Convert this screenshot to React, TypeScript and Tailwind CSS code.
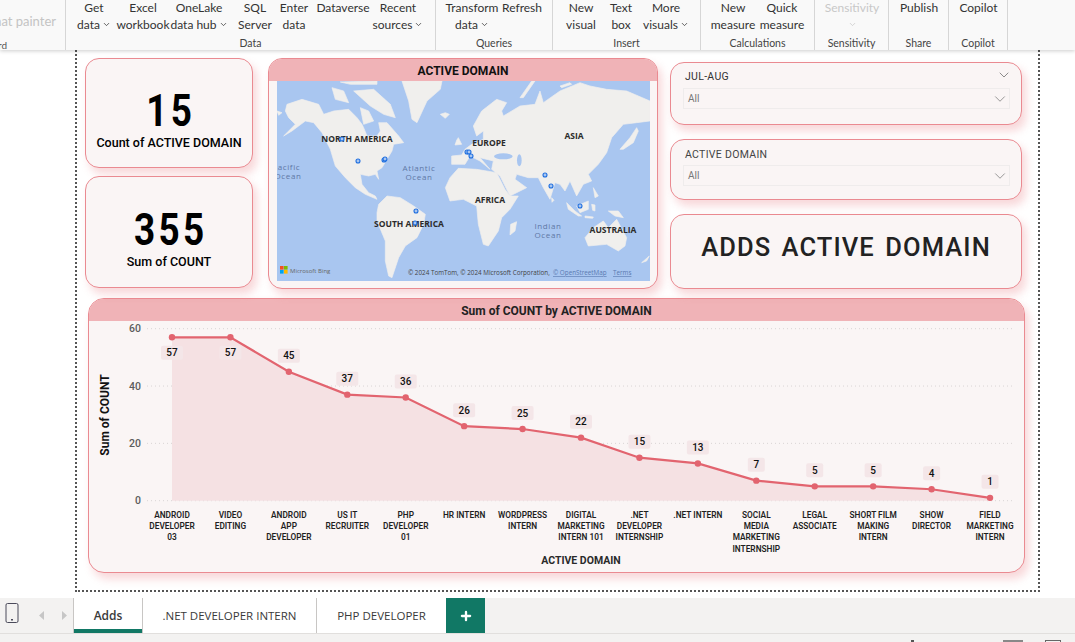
import { ChevronDown, Plus } from "lucide-react";

const din = "font-['Roboto',sans-serif]";

const ribbonGroups = [
  {
    label: "Data",
    width: 370,
    pad: 6,
    items: [
      { w: 44, lines: ["Get", "data"], menu: true },
      { w: 54, lines: ["Excel", "workbook"] },
      { w: 58, lines: ["OneLake", "data hub"], menu: true },
      { w: 54, lines: ["SQL", "Server"] },
      { w: 24, lines: ["Enter", "data"] },
      { w: 74, lines: ["Dataverse"] },
      { w: 36, lines: ["Recent", "sources"], menu: true },
    ],
  },
  {
    label: "Queries",
    width: 117,
    pad: 9,
    items: [
      { w: 54, lines: ["Transform", "data"], menu: true },
      { w: 46, lines: ["Refresh"] },
    ],
  },
  {
    label: "Insert",
    width: 148,
    pad: 7,
    items: [
      { w: 42, lines: ["New", "visual"] },
      { w: 38, lines: ["Text", "box"] },
      { w: 52, lines: ["More", "visuals"], menu: true },
    ],
  },
  {
    label: "Calculations",
    width: 114,
    pad: 7,
    items: [
      { w: 50, lines: ["New", "measure"] },
      { w: 48, lines: ["Quick", "measure"] },
    ],
  },
  {
    label: "Sensitivity",
    width: 74,
    pad: 0,
    items: [{ w: 74, lines: ["Sensitivity", ""], menu: true, off: true }],
  },
  { label: "Share", width: 60, pad: 0, items: [{ w: 60, lines: ["Publish"] }] },
  { label: "Copilot", width: 59, pad: 0, items: [{ w: 59, lines: ["Copilot"] }] },
];

function Ribbon() {
  return (
    <div className="relative z-10 flex h-[50px] overflow-hidden bg-[#f9f9f9] font-['Lato',sans-serif] text-[12px] leading-[17px] text-[#333] shadow-[0_1px_4px_rgba(0,0,0,0.2)]">
      <div className="relative h-full w-[66px] shrink-0 border-r border-[#d6d6d6]">
        <span className="absolute right-[9px] top-[13px] whitespace-nowrap text-[13px] text-[#c4c4c4]">mat painter</span>
        <span className="absolute right-[58px] top-[37px] text-[10px] text-[#555]">rd</span>
      </div>
      {ribbonGroups.map((g) => (
        <div key={g.label} style={{ width: g.width }} className="relative h-full shrink-0 border-r border-[#d6d6d6]">
          <div className="-mt-[1px] flex" style={{ paddingLeft: g.pad }}>
            {g.items.map((it) => (
              <div
                key={it.lines[0]}
                style={{ width: it.w }}
                className={`flex shrink-0 flex-col items-center whitespace-nowrap ${it.off ? "text-[#c8c8c8]" : ""}`}
              >
                {it.lines.map((l, i) => (
                  <span key={i} className="flex h-[17px] items-center gap-[2px]">
                    {l}
                    {it.menu && i === it.lines.length - 1 && <ChevronDown size={9} strokeWidth={2} />}
                  </span>
                ))}
              </div>
            ))}
          </div>
          <div className="absolute bottom-0 left-0 right-0 text-center text-[10.5px] leading-[14px] text-[#444]">{g.label}</div>
        </div>
      ))}
    </div>
  );
}

// traced per half of the map, in 3x crop units
const westLand = [
  "30,70 75,55 125,70 140,100 170,90 215,85 240,110 255,130 260,140 270,165 300,165 310,150 305,125 330,125 365,165 380,185 350,190 345,210 330,235 315,260 300,270 305,295 295,280 275,285 250,280 255,310 275,335 295,345 300,355 265,340 235,320 205,290 175,255 160,205 135,155 110,125 85,120 45,150 20,165 55,130 35,110 25,90",
  "165,20 200,30 215,65 175,55",
  "230,30 290,25 340,70 355,110 320,100 280,75",
  "250,80 275,90 290,120 260,130",
  "190,3 300,0 300,10 220,10",
  "305,370 330,345 370,350 410,375 445,400 440,430 420,470 385,495 365,530 345,590 335,585 325,540 325,480 300,420 300,395",
  "375,0 495,0 490,25 450,60 420,125 405,115 395,60",
  "490,100 505,95 517,100 505,112",
  "0,90 15,95 5,103",
];
const eastLand = [
  "-25,225 5,222 15,205 35,190 70,175 70,150 50,165 40,135 65,90 110,55 140,65 125,90 130,105 180,75 225,70 240,30 250,65 300,30 360,5 390,15 440,25 500,30 570,60 570,120 530,125 490,130 455,170 440,215 415,250 385,280 395,300 370,310 350,345 330,300 315,330 300,310 285,305 270,355 250,320 235,290 205,290 170,280 165,295 200,320 150,345 120,285 95,265 100,240 60,230 90,265 60,240 30,225 15,250 -25,250",
  "-44,320 -30,290 -5,262 50,265 110,275 135,325 150,345 175,345 150,385 125,410 115,450 85,495 70,490 55,430 50,375 10,355 -30,360",
  "152,430 170,422 165,450 150,462",
  "375,470 400,440 430,420 445,440 470,415 500,470 495,495 475,510 440,490 385,495",
  "320,365 345,390 365,405 355,405 325,385",
  "350,375 385,360 385,385 360,395",
  "445,390 475,390 490,410 465,405",
  "375,405 400,408 398,412 375,410",
  "395,370 405,372 405,390 398,388",
  "400,320 415,345 405,350",
  "510,170 530,140 535,150 520,185 490,205 480,205",
  "180,50 215,0 225,0 190,50",
  "300,15 330,5 335,10 305,20",
  "-5,170 5,190 -15,192 -10,178",
  "545,545 568,525 560,540",
  "275,350 282,358 276,364",
];

function WorldMap() {
  const pins: [number, number][] = [
    [342, 139], [358, 161], [384, 160], [385, 159], [467, 152], [469, 152], [471, 156],
    [545, 175], [551, 186], [580, 206], [416, 211], [415, 223],
  ];
  const names: [string, number, number][] = [
    ["NORTH AMERICA", 357, 142], ["EUROPE", 489, 146], ["ASIA", 574, 139], ["AFRICA", 490, 203],
    ["SOUTH AMERICA", 409, 227], ["AUSTRALIA", 613, 233],
  ];
  const seas: [string, number, number][] = [
    ["acific", 289, 170], ["Ocean", 288, 179], ["Atlantic", 419, 171], ["Ocean", 419, 180], ["Indian", 548, 229], ["Ocean", 548, 238],
  ];
  return (
    <svg viewBox="277 81 373 200" className="ml-[8px] block h-[200px] w-[373px] font-['Open_Sans',sans-serif]">
      <rect x="277" y="81" width="373" height="200" fill="#a9c6f0" />
      <g transform="translate(277 81) scale(0.3333)">
        {westLand.map((p) => (
          <polygon key={p} points={p} fill="#f0efed" stroke="#f0efed" strokeWidth="2" strokeLinejoin="round" />
        ))}
      </g>
      <g transform="translate(460 81) scale(0.3333)">
        {eastLand.map((p) => (
          <polygon key={p} points={p} fill="#f0efed" stroke="#f0efed" strokeWidth="2" strokeLinejoin="round" />
        ))}
        <ellipse cx="130" cy="226" rx="28" ry="9" fill="#a9c6f0" />
        <ellipse cx="178" cy="238" rx="7" ry="18" fill="#a9c6f0" />
      </g>
      {names.map(([t, x, y]) => (
        <text key={t} x={x} y={y} textAnchor="middle" fontSize="8.5" fontWeight="700" fill="#2b2b2b">{t}</text>
      ))}
      {seas.map(([t, x, y]) => (
        <text key={t + x + y} x={x} y={y} textAnchor="middle" fontSize="8" letterSpacing="0.6" fill="#5f78a6">{t}</text>
      ))}
      {pins.map(([x, y]) => (
        <circle key={x + "-" + y} cx={x} cy={y} r="2" fill="#a9c6f0" stroke="#1f6fe0" strokeWidth="1.1" />
      ))}
      <rect x="280" y="266" width="3.6" height="3.6" fill="#f25022" />
      <rect x="284" y="266" width="3.6" height="3.6" fill="#7fba00" />
      <rect x="280" y="270" width="3.6" height="3.6" fill="#00a4ef" />
      <rect x="284" y="270" width="3.6" height="3.6" fill="#ffb900" />
      <text x="290" y="273" fontSize="6" fill="#666">Microsoft Bing</text>
      <text x="408" y="275" fontSize="6.3" fill="#444">© 2024 TomTom, © 2024 Microsoft Corporation, </text>
      <text x="553" y="275" fontSize="6.3" fill="#5a7ab0" textDecoration="underline">© OpenStreetMap</text>
      <text x="613" y="275" fontSize="6.3" fill="#5a7ab0" textDecoration="underline">Terms</text>
    </svg>
  );
}

const rows = [
  { v: 57, below: true, l: ["ANDROID", "DEVELOPER", "03"] },
  { v: 57, below: true, l: ["VIDEO", "EDITING"] },
  { v: 45, l: ["ANDROID", "APP", "DEVELOPER"] },
  { v: 37, l: ["US IT", "RECRUITER"] },
  { v: 36, l: ["PHP", "DEVELOPER", "01"] },
  { v: 26, l: ["HR INTERN"] },
  { v: 25, l: ["WORDPRESS", "INTERN"] },
  { v: 22, l: ["DIGITAL", "MARKETING", "INTERN 101"] },
  { v: 15, l: [".NET", "DEVELOPER", "INTERNSHIP"] },
  { v: 13, l: [".NET INTERN"] },
  { v: 7, l: ["SOCIAL", "MEDIA", "MARKETING", "INTERNSHIP"] },
  { v: 5, l: ["LEGAL", "ASSOCIATE"] },
  { v: 5, l: ["SHORT FILM", "MAKING", "INTERN"] },
  { v: 4, l: ["SHOW", "DIRECTOR"] },
  { v: 1, l: ["FIELD", "MARKETING", "INTERN"] },
];

function LineChart() {
  const px = (i: number) => 172 + i * 58.43;
  const py = (v: number) => 500.7 - (v * 172) / 60;
  const line = rows.map((r, i) => `${px(i)},${py(r.v)}`).join(" ");
  return (
    <svg viewBox="89 321 935 251" className={`block h-[251px] w-[935px] ${din}`}>
      {[0, 20, 40, 60].map((t) => (
        <g key={t}>
          <line x1="147" x2="1012" y1={py(t)} y2={py(t)} stroke="#d9d5d5" strokeWidth="1" strokeDasharray="1 3" />
          <text x="141" y={py(t) + 3.5} textAnchor="end" fontSize="10.5" fontWeight="500" fill="#5c5c5c">{t}</text>
        </g>
      ))}
      <polygon points={`172,500.7 ${line} 990,500.7`} fill="#f5e1e3" />
      <polyline points={line} fill="none" stroke="#e2646f" strokeWidth="2.2" />
      {rows.map((r, i) => (
        <circle key={i} cx={px(i)} cy={py(r.v)} r="3.2" fill="#e2646f" />
      ))}
      {rows.map((r, i) => {
        const cy = r.below ? py(r.v) + 15.5 : py(r.v) - 16;
        const w = r.v < 10 ? 17 : 22;
        return (
          <g key={i}>
            <rect x={px(i) - w / 2} y={cy - 7} width={w} height="14" rx="2" fill="#f4e6e8" />
            <text x={px(i)} y={cy + 3.5} textAnchor="middle" fontSize="10" fontWeight="500" fill="#111">{r.v}</text>
          </g>
        );
      })}
      {rows.map((r, i) =>
        r.l.map((t, j) => (
          <text key={t + j} x={px(i)} y={518 + j * 11 + (j === 3 ? 1 : 0)} textAnchor="middle" fontSize="8.3" fontWeight="600" fill="#1f1f1f">{t}</text>
        ))
      )}
      <text x="581" y="564" textAnchor="middle" fontSize="10.5" fontWeight="700" fill="#2a2a2a">ACTIVE DOMAIN</text>
      <text transform="translate(109 415) rotate(-90)" textAnchor="middle" fontSize="12" fontWeight="700" fill="#111">Sum of COUNT</text>
    </svg>
  );
}

const card = "rounded-[14px] border border-[#ea8a91] bg-[#faf5f5] shadow-[4px_6px_9px_rgba(232,134,141,0.32)]";

function Kpi({ value, label, cls }: { value: string; label: string; cls: string }) {
  return (
    <div className={`${card} ${cls} flex flex-col items-center justify-center w-[168px] text-black ${din}`}>
      <div className="ml-[4px] mt-[16px] scale-x-[0.82] text-[45px] font-bold leading-[40px] tracking-[4px]">{value}</div>
      <div className="mt-[4px] text-[12.5px] font-medium leading-[16px]">{label}</div>
    </div>
  );
}

function Slicer({ title, cls, dark }: { title: string; cls: string; dark?: boolean }) {
  return (
    <div className={`${card} ${cls} relative pl-[12px] pr-[11px] ${dark ? "pt-[6px]" : "pt-[7px]"}`}>
      <div className={`pl-[2px] text-[10.5px] leading-[15px] tracking-[0.3px] ${din} ${dark ? "text-[#333]" : "text-[#444]"}`}>{title}</div>
      {dark && <ChevronDown size={16} strokeWidth={1} className="absolute right-[9px] top-[4px] text-[#555]" />}
      <div className={`${dark ? "mt-[4px]" : "mt-[3px]"} flex h-[21px] items-center justify-between border border-[#efecec] pl-[4px] text-[10px] text-[#777] ${din}`}>
        All
        <ChevronDown size={18} strokeWidth={1} className="text-[#777]" />
      </div>
    </div>
  );
}

function Tabs() {
  return (
    <div className="flex h-[36px] border-b border-[#e1dfdd] bg-[#f3f2f1] font-['Open_Sans',sans-serif] text-[11.5px] text-[#3a3a3a]">
      <div className="flex w-[73px] shrink-0 items-center">
        <svg width="14" height="21" viewBox="0 0 14 21" className="ml-[5px] -mt-[4px]">
          <rect x="1" y="0.5" width="12" height="19" rx="1.5" fill="none" stroke="#4a4a5a" strokeWidth="1" />
          <rect x="6" y="16" width="2" height="1.5" fill="#4a4a5a" />
        </svg>
        <svg width="6" height="9" viewBox="0 0 6 9" className="ml-[20px]">
          <polygon points="5,0 0,4.5 5,9" fill="#c6c6c6" />
        </svg>
        <svg width="6" height="9" viewBox="0 0 6 9" className="ml-[16px]">
          <polygon points="1,0 6,4.5 1,9" fill="#c6c6c6" />
        </svg>
      </div>
      <div className="relative flex w-[70px] items-center justify-center border-x border-[#c8c6c4] bg-white text-[12px] font-semibold">
        Adds
        <div className="absolute bottom-0 left-0 right-0 h-[4px] bg-[#117865]" />
      </div>
      <div className="flex w-[174px] items-center justify-center border-r border-[#c8c6c4] bg-white">.NET DEVELOPER INTERN</div>
      <div className="flex w-[129px] items-center justify-center bg-white">PHP DEVELOPER</div>
      <div className="flex w-[39px] items-center justify-center bg-[#117865] text-white">
        <Plus size={14} strokeWidth={4} />
      </div>
    </div>
  );
}

export default function App() {
  return (
    <div className="h-[642px] w-[1075px] overflow-hidden bg-white">
      <Ribbon />
      <div className="h-[548px]">
        <div className="ml-[75px] h-[542px] w-[965px] border-2 border-t-0 border-dotted border-[#555] pt-[8px]">
          <div className="flex items-start">
            <div className="ml-[8px] flex flex-col gap-[8px]">
              <Kpi value="15" label="Count of ACTIVE DOMAIN" cls="h-[110px]" />
              <Kpi value="355" label="Sum of COUNT" cls="h-[112px]" />
            </div>
            <div className={`${card} ml-[15px] h-[231px] w-[390px] overflow-hidden`}>
              <div className={`flex h-[22px] items-center justify-center bg-[#f0b3b7] pt-[2px] text-[12px] font-bold text-[#111] ${din}`}>ACTIVE DOMAIN</div>
              <WorldMap />
            </div>
            <div className="ml-[12px] flex w-[352px] flex-col pt-[4px]">
              <Slicer title="JUL-AUG" cls="h-[63px]" dark />
              <Slicer title="ACTIVE DOMAIN" cls="mt-[14px] h-[61px]" />
              <div className={`${card} mt-[14px] flex h-[75px] items-center justify-center pb-[8px] font-['Roboto',sans-serif] text-[25.5px] font-medium tracking-[1.1px] text-[#222] [word-spacing:3px]`}>
                ADDS ACTIVE DOMAIN
              </div>
            </div>
          </div>
          <div className={`${card} ml-[11px] mt-[9px] h-[275px] w-[937px] overflow-hidden rounded-[16px]`}>
            <div className={`flex h-[22px] items-center justify-center bg-[#f0b3b7] pt-[1px] text-[12px] font-bold text-[#222] ${din}`}>Sum of COUNT by ACTIVE DOMAIN</div>
            <LineChart />
          </div>
        </div>
      </div>
      <Tabs />
      <div className="relative h-[8px] bg-[#f3f2f1]">
        <div className="absolute left-[911px] top-[6px] h-[2px] w-[3px] bg-[#555]" />
        <div className="absolute left-[1003px] top-[6px] h-[2px] w-[20px] bg-[#888]" />
        <div className="absolute left-[1045px] top-[6px] h-[2px] w-[16px] border-x border-t border-[#666]" />
      </div>
    </div>
  );
}
